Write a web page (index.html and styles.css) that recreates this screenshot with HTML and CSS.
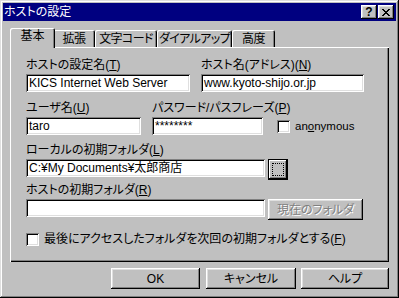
FILE: index.html
```html
<!DOCTYPE html>
<html lang="ja">
<head>
<meta charset="utf-8">
<title>ホストの設定</title>
<link rel="stylesheet" href="styles.css">
</head>
<body>
<div class="window">
  <div class="titlebar">
    <span class="title">ホストの設定</span>
    <span class="tbtn help-q">?</span>
    <span class="tbtn">
      <svg width="8" height="7" viewBox="0 0 8 7" shape-rendering="crispEdges"><path d="M0 0h2v1h-2zM6 0h2v1h-2zM1 1h2v1h-2zM5 1h2v1h-2zM2 2h4v1h-4zM3 3h2v1h-2zM2 4h4v1h-4zM1 5h2v1h-2zM5 5h2v1h-2zM0 6h2v1h-2zM6 6h2v1h-2z" fill="#000"/></svg>
    </span>
  </div>
  <div class="body">
    <div class="tabs">
      <div class="tab sel w1">基本</div>
      <div class="tab w2">拡張</div>
      <div class="tab w3">文字コード</div>
      <div class="tab w4">ダイアルアップ</div>
      <div class="tab w5">高度</div>
    </div>
    <div class="panel">
      <div class="row r1">
        <div class="field f-name">
          <div class="label">ホストの設定名(<u>T</u>)</div>
          <div class="input">KICS Internet Web Server</div>
        </div>
        <div class="field f-host">
          <div class="label">ホスト名(アドレス)(<u>N</u>)</div>
          <div class="input">www.kyoto-shijo.or.jp</div>
        </div>
      </div>
      <div class="row r2">
        <div class="field f-user">
          <div class="label">ユーザ名(<u>U</u>)</div>
          <div class="input">taro</div>
        </div>
        <div class="field f-pass">
          <div class="label">パスワード/パスフレーズ(<u>P</u>)</div>
          <div class="input">********</div>
        </div>
        <div class="check anon">
          <span class="box"></span>
          <span class="ctext latin">an<u>o</u>nymous</span>
        </div>
      </div>
      <div class="row r3">
        <div class="field f-wide">
          <div class="label">ローカルの初期フォルダ(<u>L</u>)</div>
          <div class="line">
            <div class="input wide">C:¥My Documents¥太郎商店</div>
            <div class="browse"><span class="focus"></span></div>
          </div>
        </div>
      </div>
      <div class="row r4">
        <div class="field f-wide">
          <div class="label">ホストの初期フォルダ(<u>R</u>)</div>
          <div class="line">
            <div class="input wide"></div>
            <div class="btn disabled cur">現在のフォルダ</div>
          </div>
        </div>
      </div>
      <div class="row r5">
        <div class="check">
          <span class="box"></span>
          <span class="ctext">最後にアクセスしたフォルダを次回の初期フォルダとする(<u>F</u>)</span>
        </div>
      </div>
    </div>
    <div class="buttons">
      <div class="btn b-ok">OK</div>
      <div class="btn b-cancel">キャンセル</div>
      <div class="btn b-help">ヘルプ</div>
    </div>
  </div>
</div>
</body>
</html>
```
FILE: styles.css
```css
* { box-sizing: border-box; }
html, body { margin: 0; padding: 0; }
body {
  width: 399px;
  height: 298px;
  overflow: hidden;
  background: #c0c0c0;
  font-family: "Liberation Sans", "Noto Sans CJK JP", sans-serif;
  font-size: 12px;
  font-feature-settings: "palt";
  color: #000;
}
u { text-decoration: underline; text-underline-offset: 1px; }

.window {
  width: 399px;
  height: 298px;
  padding: 3px;
  background: #c0c0c0;
  box-shadow: inset -1px -1px #000, inset 1px 1px #dfdfdf, inset -2px -2px #808080, inset 2px 2px #fff;
  display: flex;
  flex-direction: column;
}

.titlebar {
  height: 18px;
  background: #000080;
  color: #fff;
  display: flex;
  align-items: center;
  padding: 0 2px 0 1px;
}
.title { flex: 1; line-height: 18px; white-space: nowrap; }
.tbtn {
  width: 16px;
  height: 14px;
  background: #c0c0c0;
  box-shadow: inset -1px -1px #000, inset 1px 1px #fff, inset -2px -2px #808080, inset 2px 2px #dfdfdf;
  display: flex;
  align-items: center;
  justify-content: center;
  color: #000;
}
.tbtn + .tbtn { margin-left: 1px; }
.help-q {
  font-weight: bold;
  font-size: 12px;
  line-height: 14px;
}

.body {
  flex: 1;
  padding: 7px 7px 0 7px;
  display: flex;
  flex-direction: column;
}

.tabs {
  height: 19px;
  display: flex;
  align-items: flex-end;
  padding-left: 2px;
  position: relative;
  z-index: 2;
}
.tab {
  height: 17px;
  line-height: 16px;
  padding-top: 1px;
  text-align: center;
  white-space: nowrap;
  letter-spacing: -0.6px;
  background: #c0c0c0;
  border-radius: 2px 2px 0 0;
  box-shadow: inset 1px 1px #fff, inset -1px 0 #000, inset -2px 0 #808080;
}
.tab.sel {
  height: 20px;
  margin: 0 -2px -1px -2px;
  line-height: 15px;
  padding-top: 1px;
  letter-spacing: 0;
  position: relative;
  z-index: 3;
}
.w1 { width: 45px; }
.w2 { width: 42px; }
.w3 { width: 62px; }
.w4 { width: 75px; }
.w5 { width: 43px; }

.panel {
  height: 215px;
  padding: 11px 0 0 16px;
  box-shadow: inset 1px 1px #fff, inset -1px -1px #000, inset -2px -2px #808080;
  display: flex;
  flex-direction: column;
}

.row { display: flex; align-items: flex-start; }
.r2 { margin-top: 9px; }
.r3 { margin-top: 8px; }
.r4 { margin-top: 3px; }
.r5 { margin-top: 12px; }

.field { display: flex; flex-direction: column; gap: 2px; }
.label { line-height: 14px; height: 14px; white-space: nowrap; }
.line { display: flex; align-items: flex-start; gap: 3px; }

.input {
  height: 18px;
  background: #fff;
  padding: 2px 3px 0 3px;
  line-height: 14px;
  white-space: nowrap;
  overflow: hidden;
  box-shadow: inset 1px 1px #808080, inset -1px -1px #fff, inset 2px 2px #000, inset -2px -2px #dfdfdf;
}

.f-name { width: 164px; }
.f-host { width: 163px; margin-left: 11px; }
.f-user { width: 115px; }
.f-pass { width: 111px; margin-left: 11px; }
.input.wide { width: 239px; }

.check { display: flex; align-items: center; gap: 5px; }
.anon { align-self: flex-end; margin-left: 14px; margin-bottom: 2px; }
.latin { font-size: 11.5px; }
.box {
  width: 13px;
  height: 13px;
  background: #fff;
  box-shadow: inset 1px 1px #808080, inset -1px -1px #fff, inset 2px 2px #000, inset -2px -2px #dfdfdf;
}
.ctext { line-height: 14px; white-space: nowrap; }

.btn {
  height: 21px;
  background: #c0c0c0;
  display: flex;
  align-items: center;
  justify-content: center;
  line-height: 14px;
  white-space: nowrap;
  box-shadow: inset -1px -1px #000, inset 1px 1px #fff, inset -2px -2px #808080, inset 2px 2px #dfdfdf;
}
.browse {
  width: 20px;
  height: 21px;
  background: #c0c0c0;
  display: flex;
  align-items: center;
  justify-content: center;
  box-shadow: inset 0 0 0 1px #000, inset -2px -2px #000, inset 2px 2px #fff, inset -3px -3px #808080;
}
.focus {
  width: 12px;
  height: 13px;
  border: 1px dotted #000;
}
.cur { width: 95px; }
.disabled { color: #808080; text-shadow: 1px 1px #fff; }

.buttons {
  display: flex;
  justify-content: flex-end;
  margin-top: 6px;
}
.b-ok { width: 89px; }
.b-cancel { width: 90px; margin-left: 6px; }
.b-help { width: 88px; margin-left: 5px; }
```
